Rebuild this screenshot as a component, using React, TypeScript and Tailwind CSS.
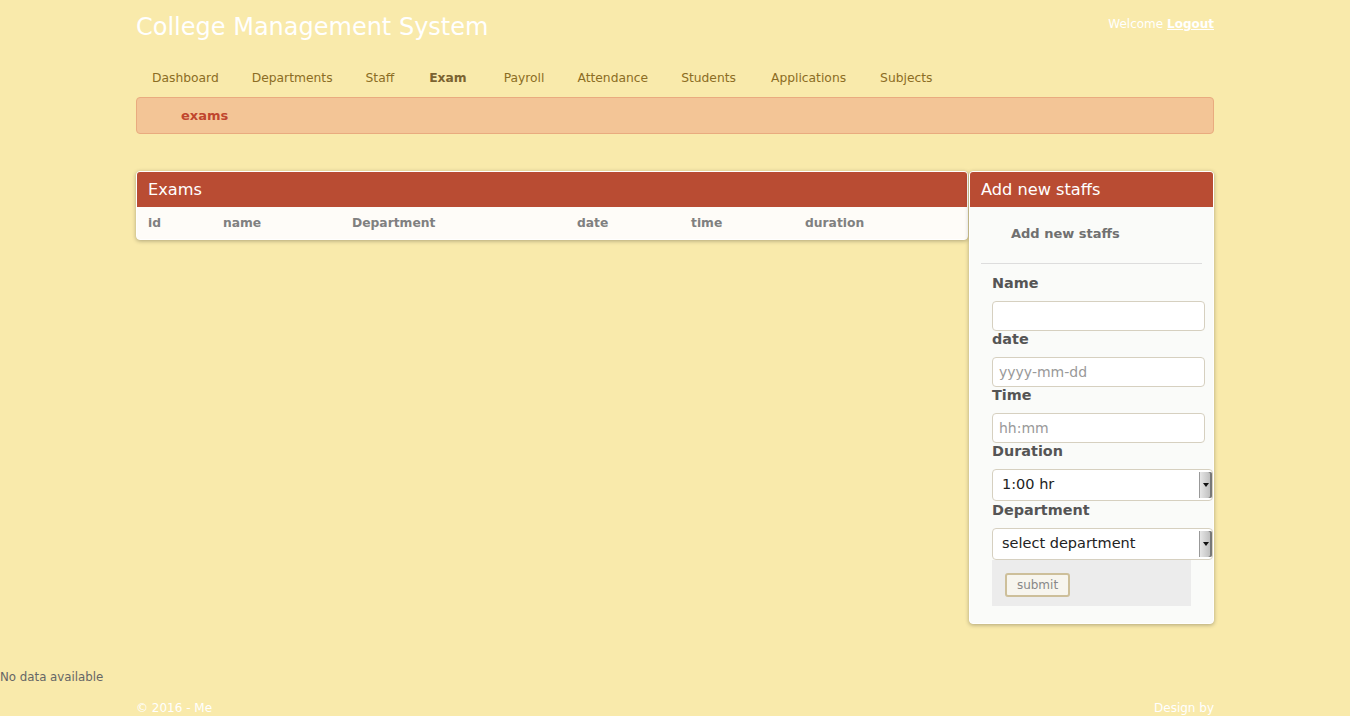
import React from 'react';

const font = { fontFamily: '"DejaVu Sans", Verdana, sans-serif' };

const navItems = [
  { label: 'Dashboard', cls: 'mr-[33px]' },
  { label: 'Departments', cls: 'mr-[33px]' },
  { label: 'Staff', cls: 'mr-[35px]' },
  { label: 'Exam', cls: 'mr-[37px] font-bold text-[#7b6331]' },
  { label: 'Payroll', cls: 'mr-[33px]' },
  { label: 'Attendance', cls: 'mr-[33px]' },
  { label: 'Students', cls: 'mr-[35px]' },
  { label: 'Applications', cls: 'mr-[34px]' },
  { label: 'Subjects', cls: '' },
];

const columns = [
  { label: 'id', w: 'w-[75px]' },
  { label: 'name', w: 'w-[129px]' },
  { label: 'Department', w: 'w-[225px]' },
  { label: 'date', w: 'w-[114px]' },
  { label: 'time', w: 'w-[114px]' },
  { label: 'duration', w: 'flex-1' },
];

function FakeSelect({ value }: { value: string }) {
  return (
    <div className="flex h-[32px] w-[221px] rounded-[4px] border border-[#d6d0c0] bg-white">
      <div className="flex flex-1 items-center pl-[9px] text-[14.5px] text-[#222]">{value}</div>
      <div className="my-[2px] flex w-[13px] items-center justify-center rounded-r-[2px] border-l border-[#999] bg-gradient-to-r from-[#e6e6e6] to-[#b8b8b8] shadow-[inset_-2px_0_0_#777]">
        <svg width="6" height="4" viewBox="0 0 6 4">
          <path d="M0 0h6L3 4z" fill="#111" />
        </svg>
      </div>
    </div>
  );
}

function Label({ children }: { children: React.ReactNode }) {
  return <div className="h-[17px] text-[14.4px] font-bold leading-[17px] text-[#555]">{children}</div>;
}

function Field({ label, placeholder }: { label: string; placeholder?: string }) {
  return (
    <>
      <Label>{label}</Label>
      <div className="mt-[9px] flex h-[30px] w-[213px] items-center rounded-[4px] border border-[#d6d0c0] bg-white pl-[6px] text-[14px] text-[#999]">
        {placeholder}
      </div>
    </>
  );
}

export default function App() {
  return (
    <div className="min-h-[716px] bg-[#f9eaab]" style={font}>
      <div className="mx-auto w-[1078px]">
        <header className="flex items-start justify-between pt-[12px]">
          <h1 className="text-[24px] leading-[30px] text-white">College Management System</h1>
          <div className="pt-[4px] text-[12px] leading-[16px] text-white">
            Welcome <a className="font-bold underline">Logout</a>
          </div>
        </header>

        <nav className="mt-[26px] flex h-[20px] items-center pl-[16px] text-[12.3px] text-[#8c6d24]">
          {navItems.map((item) => (
            <span key={item.label} className={item.cls}>
              {item.label}
            </span>
          ))}
        </nav>

        <div className="mt-[9px] flex h-[37px] items-center rounded-[4px] border border-[#e9ab7f] bg-[#f3c596] pl-[44px] pt-[1px] text-[13px] font-bold text-[#c0462e]">
          exams
        </div>

        <div className="mt-[37px] flex items-start">
          <section className="w-[832px] overflow-hidden rounded-[4px] border border-white bg-[#fefcf8] shadow-[0_1px_4px_rgba(0,0,0,0.3)]">
            <div className="flex h-[35px] items-center bg-[#b94c33] pl-[11px] pt-[1px] text-[16.2px] text-white">Exams</div>
            <div className="flex h-[32px] items-center pl-[11px] pt-[1px] text-[12.3px] font-bold text-[#808080]">
              {columns.map((c) => (
                <div key={c.label} className={c.w}>
                  {c.label}
                </div>
              ))}
            </div>
          </section>

          <section className="ml-[1px] w-[245px] overflow-hidden rounded-[4px] border border-white bg-[#fafbf9] pb-[17px] shadow-[0_1px_4px_rgba(0,0,0,0.3)]">
            <div className="flex h-[35px] items-center bg-[#b94c33] pl-[11px] pt-[1px] text-[16.2px] text-white">
              Add new staffs
            </div>
            <div className="px-[11px]">
              <div className="h-[57px] border-b border-[#dddddd] pl-[30px] pt-[17px] text-[13px] font-bold text-[#707070]">
                Add new staffs
              </div>
              <div className="pl-[11px] pt-[11px]">
                <Field label="Name" />
                <Field label="date" placeholder="yyyy-mm-dd" />
                <Field label="Time" placeholder="hh:mm" />
                <Label>Duration</Label>
                <div className="mt-[9px]">
                  <FakeSelect value="1:00 hr" />
                </div>
                <div className="pt-[1px]">
                  <Label>Department</Label>
                </div>
                <div className="mt-[9px]">
                  <FakeSelect value="select department" />
                </div>
                <div className="h-[46px] w-[199px] bg-[#ececec] pl-[13px] pt-[12px]">
                  <button className="h-[24px] w-[65px] rounded-[3px] border-2 border-[#cdbf9a] bg-[#f7f5ee] text-[12px] text-[#888]">
                    submit
                  </button>
                </div>
              </div>
            </div>
          </section>
        </div>
      </div>

      <div className="mt-[45px] text-[11.8px] leading-[16px] text-[#666]">No data available</div>

      <footer className="mx-auto mt-[15px] flex w-[1078px] justify-between text-[12px] leading-[16px] text-white">
        <span>© 2016 - Me</span>
        <span>Design by</span>
      </footer>
    </div>
  );
}
